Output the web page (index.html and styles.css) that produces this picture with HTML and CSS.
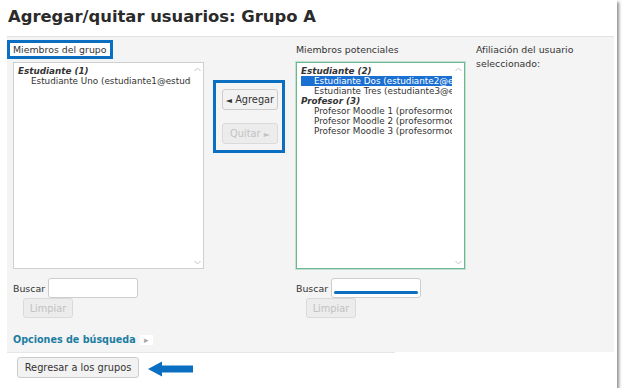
FILE: index.html
```html
<!DOCTYPE html>
<html lang="es">
<head>
    <meta charset="UTF-8">
    <meta name="viewport" content="width=device-width, initial-scale=1.0">
    <title>Agregar/quitar usuarios</title>
    <link rel="stylesheet" href="styles.css">
</head>
<body>
    <div class="card">
        <h2 class="page-title">Agregar/quitar usuarios: Grupo A</h2>
        <div class="panel">
            <div class="columns">
                <div class="col col-members">
                    <div class="col-label"><span class="marked">Miembros del grupo</span></div>
                    <div class="listbox">
                        <div class="list-items">
                            <div class="group-name">Estudiante (1)</div>
                            <div class="option">Estudiante Uno (estudiante1@estudia</div>
                        </div>
                        <div class="scrollbar">
                            <svg width="7" height="5" viewBox="0 0 7 5"><polyline points="0.5,4 3.5,1 6.5,4" fill="none" stroke="#c4c4c4" stroke-width="1"/></svg>
                            <svg width="7" height="5" viewBox="0 0 7 5"><polyline points="0.5,1 3.5,4 6.5,1" fill="none" stroke="#c4c4c4" stroke-width="1"/></svg>
                        </div>
                    </div>
                    <div class="search-row">
                        <span>Buscar</span>
                        <span class="search-input"></span>
                    </div>
                    <button class="btn btn-small" disabled>Limpiar</button>
                </div>

                <div class="col col-actions">
                    <div class="actions-box">
                        <button class="btn btn-action"><span class="btn-arrow">&#9668;</span> Agregar</button>
                        <button class="btn btn-action" disabled>Quitar <span class="btn-arrow">&#9658;</span></button>
                    </div>
                </div>

                <div class="col col-potential">
                    <div class="col-label">Miembros potenciales</div>
                    <div class="listbox listbox-focus">
                        <div class="list-items">
                            <div class="group-name">Estudiante (2)</div>
                            <div class="option selected">Estudiante Dos (estudiante2@e</div>
                            <div class="option">Estudiante Tres (estudiante3@e</div>
                            <div class="group-name">Profesor (3)</div>
                            <div class="option">Profesor Moodle 1 (profesormoo</div>
                            <div class="option">Profesor Moodle 2 (profesormoo</div>
                            <div class="option">Profesor Moodle 3 (profesormoo</div>
                        </div>
                        <div class="scrollbar">
                            <svg width="7" height="5" viewBox="0 0 7 5"><polyline points="0.5,4 3.5,1 6.5,4" fill="none" stroke="#c4c4c4" stroke-width="1"/></svg>
                            <svg width="7" height="5" viewBox="0 0 7 5"><polyline points="0.5,1 3.5,4 6.5,1" fill="none" stroke="#c4c4c4" stroke-width="1"/></svg>
                        </div>
                    </div>
                    <div class="search-row">
                        <span>Buscar</span>
                        <span class="search-input"><span class="search-mark"></span></span>
                    </div>
                    <button class="btn btn-small" disabled>Limpiar</button>
                </div>

                <div class="col col-info">
                    <div class="info-label">Afiliación del usuario seleccionado:</div>
                </div>
            </div>

            <div class="search-options">
                <span class="options-link">Opciones de búsqueda</span>
                <span class="options-toggle">&#9656;</span>
            </div>
        </div>
        <div class="footer-line"></div>
        <div class="footer">
            <button class="btn btn-back">Regresar a los grupos</button>
            <svg class="back-arrow" width="46" height="16" viewBox="0 0 46 16">
                <polygon points="0,8 14,0.5 14,4.5 45,4.5 45,11.5 14,11.5 14,15.5" fill="#0a6fc0"/>
            </svg>
        </div>
    </div>
</body>
</html>
```

FILE: styles.css
```css
body {
    margin: 0;
    background-color: #ffffff;
    font-family: "DejaVu Sans", Verdana, sans-serif;
    font-size: 9.4px;
    color: #333333;
}

.card {
    width: 617px;
    height: 388px;
    background-color: #ffffff;
    box-shadow: 2px 2px 3px rgba(0, 0, 0, 0.45);
    overflow: hidden;
}

.page-title {
    margin: 0 3px 0 7px;
    padding: 7px 0 0 1px;
    height: 29px;
    font-size: 16.4px;
    font-weight: bold;
    color: #2b2b2b;
    border-bottom: 1px solid #e2e2e2;
}

.panel {
    margin-left: 7px;
    margin-right: 3px;
    height: 315px;
    background-color: #f4f4f4;
    padding: 3px 0 0 6px;
    box-sizing: border-box;
}

.columns {
    display: flex;
}

.col-members {
    width: 191px;
}

.col-actions {
    margin-left: 9px;
    padding-top: 40px;
}

.col-potential {
    margin-left: 11px;
    width: 169px;
}

.col-info {
    margin-left: 11px;
    padding-top: 3px;
}

.col-label {
    height: 19px;
    display: flex;
    align-items: center;
    margin-bottom: 3px;
}

.marked {
    margin-left: -6px;
    border: 3px solid #0a6fc0;
    padding: 0 3px;
    line-height: 13px;
    background-color: #ffffff;
}

.listbox {
    display: flex;
    height: 207px;
    background-color: #ffffff;
    border: 1px solid #cfcfcf;
    box-sizing: border-box;
}

.listbox-focus {
    border-color: #6ab993;
    box-shadow: 0 0 0 1px rgba(106, 185, 147, 0.35);
}

.list-items {
    flex: 1;
    overflow: hidden;
    padding: 3px 0 0 4px;
    line-height: 10px;
    font-size: 8.8px;
    white-space: nowrap;
}

.group-name {
    font-weight: bold;
    font-style: italic;
}

.option {
    padding-left: 13px;
}

.option.selected {
    background-color: #1a6fd2;
    color: #ffffff;
}

.scrollbar {
    width: 12px;
    display: flex;
    flex-direction: column;
    justify-content: space-between;
    align-items: center;
    padding: 4px 0 3px;
}

.search-row {
    display: flex;
    align-items: center;
    margin-top: 9px;
}

.search-input {
    display: flex;
    align-items: flex-end;
    justify-content: center;
    margin-left: 3px;
    width: 90px;
    height: 20px;
    box-sizing: border-box;
    background-color: #ffffff;
    border: 1px solid #cccccc;
    border-radius: 3px;
    padding-bottom: 3px;
}

.search-mark {
    width: 84px;
    height: 3px;
    border-radius: 2px;
    background-color: #0a6fc0;
}

.btn {
    display: block;
    font-family: "DejaVu Sans", Verdana, sans-serif;
    font-size: 9.8px;
    color: #333333;
    background-color: #f2f2f2;
    border: 1px solid #cccccc;
    border-radius: 3px;
    padding: 0;
    white-space: nowrap;
}

.btn:disabled {
    color: #c2c2c2;
    background-color: #ececec;
    border-color: #dadada;
}

.btn-arrow {
    font-size: 8px;
}

.btn-small {
    margin-left: 10px;
    width: 50px;
    height: 20px;
}

.actions-box {
    display: flex;
    flex-direction: column;
    gap: 13px;
    border: 3px solid #0a6fc0;
    padding: 6px 5px 6px 6px;
    width: 72px;
    box-sizing: border-box;
}

.btn-action {
    width: 56px;
    height: 21px;
}

.info-label {
    width: 120px;
    line-height: 14px;
}

.search-options {
    display: flex;
    align-items: center;
    margin-top: 16px;
}

.options-link {
    font-weight: bold;
    color: #1d7da1;
    font-size: 9.6px;
}

.options-toggle {
    margin-left: 4px;
    width: 13px;
    height: 10px;
    background-color: #ffffff;
    color: #a8a8a8;
    font-size: 9px;
    line-height: 10px;
    text-align: center;
}

.footer-line {
    margin-left: 7px;
    width: 388px;
    height: 1px;
    background-color: #e6e6e6;
}

.footer {
    display: flex;
    align-items: center;
    padding: 4px 0 0 17px;
}

.btn-back {
    width: 122px;
    height: 21px;
    font-size: 9.8px;
}

.back-arrow {
    margin-left: 9px;
    margin-top: 2px;
}
```
